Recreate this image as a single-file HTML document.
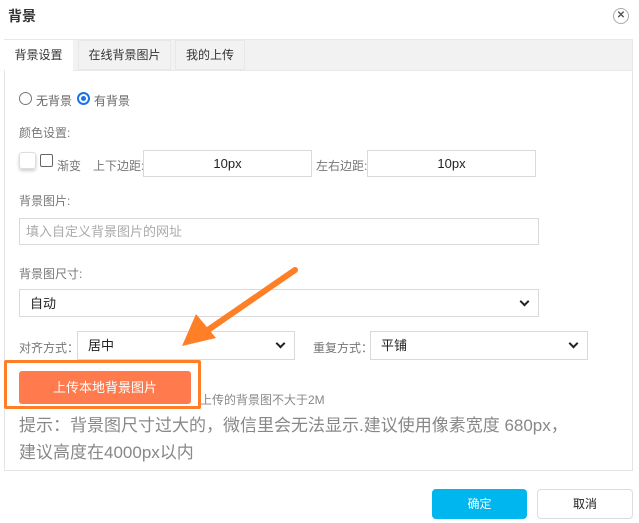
<!DOCTYPE html>
<html><head><meta charset="utf-8"><style>
*{box-sizing:border-box;margin:0;padding:0}
body{width:639px;height:523px;background:#fff;font-family:"Liberation Sans","Noto Sans CJK SC",sans-serif;position:relative;overflow:hidden;color:#333}
.a{position:absolute}
.lbl{font-size:12px;color:#777}
.inp{position:absolute;border:1px solid #d9d9d9;background:#fff;font-size:13px;color:#222}
.sel{position:absolute;border:1px solid #d9d9d9;background:#fff;font-size:13px;color:#222;padding-left:10px;line-height:27px}
.sel:after{content:"";position:absolute;right:10px;top:8px;width:5px;height:5px;border-right:2px solid #222;border-bottom:2px solid #222;transform:rotate(45deg)}
</style></head><body>
<div class="a" style="left:8px;top:6px;font-size:14px;font-weight:bold;color:#333">背景</div>
<div class="a" style="left:613px;top:8px;width:16px;height:16px;border:1px solid #aaa;border-radius:50%;font-size:10px;line-height:14px;text-align:center;color:#555;font-weight:bold">✕</div>
<div class="a" style="left:4px;top:39px;width:629px;height:32px;background:#f2f2f2;border:1px solid #e8e8e8"></div>
<div class="a" style="left:4px;top:40px;width:69px;height:31px;background:#fff;font-size:12px;line-height:31px;text-align:center;color:#333">背景设置</div>
<div class="a" style="left:78px;top:40px;width:93px;height:30px;border:1px solid #e8e8e8;font-size:12px;line-height:29px;text-align:center;color:#333">在线背景图片</div>
<div class="a" style="left:175px;top:40px;width:70px;height:30px;border:1px solid #e8e8e8;font-size:12px;line-height:29px;text-align:center;color:#333">我的上传</div>
<div class="a" style="left:4px;top:70px;width:629px;height:401px;border:1px solid #e5e5e5;border-top:none"></div>
<div class="a" style="left:19px;top:92px;width:13px;height:13px;border:1px solid #777;border-radius:50%"></div>
<div class="a lbl" style="left:36px;top:92px;color:#666">无背景</div>
<div class="a" style="left:77px;top:92px;width:13px;height:13px;border:2px solid #1a73e8;border-radius:50%;background:#fff"><div style="margin:2px;width:5px;height:5px;border-radius:50%;background:#1a73e8"></div></div>
<div class="a lbl" style="left:94px;top:92px;color:#666">有背景</div>
<div class="a lbl" style="left:19px;top:124px">颜色设置:</div>
<div class="a" style="left:19px;top:152px;width:17px;height:17px;border:1px solid #ddd;border-radius:3px;box-shadow:0 2px 3px rgba(0,0,0,.2)"></div>
<div class="a" style="left:40px;top:154px;width:13px;height:13px;border:1px solid #666;border-radius:2px"></div>
<div class="a lbl" style="left:57px;top:157px">渐变</div>
<div class="a lbl" style="left:93px;top:157px">上下边距:</div>
<div class="inp" style="left:143px;top:150px;width:169px;height:27px;text-align:center;line-height:25px">10px</div>
<div class="a lbl" style="left:316px;top:157px">左右边距:</div>
<div class="inp" style="left:367px;top:150px;width:169px;height:27px;text-align:center;line-height:25px">10px</div>
<div class="a lbl" style="left:19px;top:192px">背景图片:</div>
<div class="inp" style="left:19px;top:218px;width:520px;height:27px;line-height:25px;padding-left:6px;color:#aaa">填入自定义背景图片的网址</div>
<div class="a lbl" style="left:19px;top:265px">背景图尺寸:</div>
<div class="sel" style="left:19px;top:289px;width:520px;height:28px">自动</div>
<div class="a lbl" style="left:19px;top:339px">对齐方式：</div>
<div class="sel" style="left:77px;top:331px;width:218px;height:29px">居中</div>
<div class="a lbl" style="left:313px;top:339px">重复方式：</div>
<div class="sel" style="left:370px;top:331px;width:218px;height:29px">平铺</div>
<div class="a" style="left:200px;top:391px;font-size:12px;color:#888">上传的背景图不大于2M</div>
<div class="a" style="left:4px;top:360px;width:197px;height:49px;border:3px solid #ff7f27;border-radius:2px;background:#fff"></div>
<div class="a" style="left:19px;top:371px;width:172px;height:33px;background:#ff7a4d;border-radius:3px;color:#fff;font-size:13px;line-height:33px;text-align:center">上传本地背景图片</div>
<div class="a" style="left:19px;top:412px;font-size:17px;color:#888;line-height:27px;width:600px">提示：背景图尺寸过大的，微信里会无法显示.建议使用像素宽度 680px，<br>建议高度在4000px以内</div>
<svg class="a" style="left:0;top:0" width="639" height="523"><line x1="295" y1="270" x2="205" y2="332" stroke="#ff7f27" stroke-width="6" stroke-linecap="round"/><polygon points="182,346 196,314 216,338" fill="#ff7f27"/></svg>
<div class="a" style="left:432px;top:489px;width:95px;height:30px;background:#00b6ee;border-radius:4px;color:#fff;font-size:12px;line-height:30px;text-align:center">确定</div>
<div class="a" style="left:537px;top:489px;width:96px;height:30px;border:1px solid #ddd;border-radius:4px;color:#222;font-size:12px;line-height:28px;text-align:center">取消</div>
</body></html>
